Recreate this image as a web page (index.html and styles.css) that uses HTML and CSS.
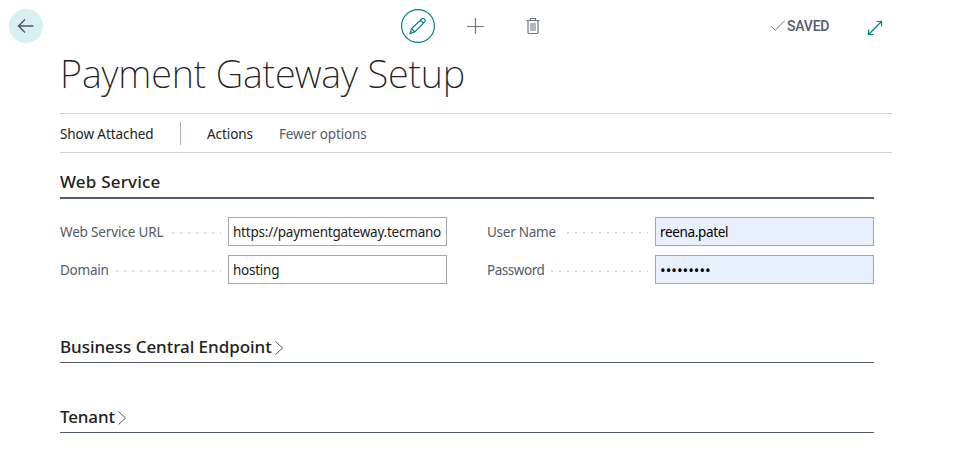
FILE: index.html
```html
<!DOCTYPE html>
<html lang="en">
<head>
<meta charset="utf-8">
<title>Payment Gateway Setup</title>
<link rel="stylesheet" href="styles.css">
</head>
<body>
<header class="topbar">
  <button class="back" aria-label="Back"><svg width="34" height="34" viewBox="0 0 34 34"><path d="M9.5 17H24.5M16 10.5L9.5 17L16 23.5"/></svg></button>
  <div class="tools">
    <button class="edit" aria-label="Edit"><svg width="34" height="34" viewBox="0 0 34 34"><circle cx="17" cy="17" r="16.4"/><path d="M9 24.5L10.7 19.6L20.9 9.8Q22.1 8.8 23.5 10.1Q25 11.6 23.8 12.9L13.6 22.9ZM10.7 19.6L13.6 22.9M19.4 11.2L22.3 14.2"/></svg></button>
    <button class="tool" aria-label="New"><svg width="18" height="18" viewBox="0 0 18 18"><path d="M1 9.5H18M9.5 1V17"/></svg></button>
    <button class="tool trash" aria-label="Delete"><svg width="16" height="18" viewBox="0 0 16 18"><path d="M1.5 3.5H14.5M5.5 3.5V1.5H10.5V3.5M3 3.5V15.5Q3 16.5 4 16.5H12Q13 16.5 13 15.5V3.5"/><path class="bin" d="M5.5 6.5H10.5V13.5H5.5Z"/></svg></button>
  </div>
  <div class="status"><svg width="16" height="12" viewBox="0 0 16 12"><path d="M1 6L5.2 10.2L14.7 .8"/></svg><span>SAVED</span></div>
  <button class="expand" aria-label="Expand"><svg width="16" height="16" viewBox="0 0 16 16"><path d="M1 15L15 1M9.5 1.5H14.5V6.5M1.5 9.5V14.5H6.5"/></svg></button>
</header>
<main>
  <h1><span>Payment Gateway Setup</span></h1>
  <nav class="actions">
    <span class="attached">Show Attached</span><i class="divider"></i><span class="menu">Actions</span><span class="fewer">Fewer options</span>
  </nav>
  <section class="group open">
    <h2><span class="h-web">Web Service</span></h2>
    <div class="fields">
      <div class="field"><span class="label l-url">Web Service URL</span><i class="dots d-url"></i><div class="input"><span class="v-url">https://paymentgateway.tecmano</span></div></div>
      <div class="field"><span class="label">User Name</span><i class="dots d-user"></i><div class="input filled"><span class="v-user">reena.patel</span></div></div>
      <div class="field"><span class="label">Domain</span><i class="dots d-domain"></i><div class="input"><span>hosting</span></div></div>
      <div class="field"><span class="label l-pass">Password</span><i class="dots d-pass"></i><div class="input filled"><span class="v-pass">•••••••••</span></div></div>
    </div>
  </section>
  <section class="group endpoint">
    <h2><span class="h-end">Business Central Endpoint</span><svg width="10" height="16" viewBox="0 0 10 16"><path d="M1.5 1.5L8.5 8L1.5 14.5"/></svg></h2>
  </section>
  <section class="group tenant">
    <h2><span class="h-ten">Tenant</span><svg width="10" height="16" viewBox="0 0 10 16"><path d="M1.5 1.5L8.5 8L1.5 14.5"/></svg></h2>
  </section>
</main>
</body>
</html>
```
FILE: styles.css
```css
* { box-sizing: border-box; }
body { margin: 0; background: #fff; color: #212121; font: 14px/20px "Noto Sans", sans-serif; height: 449px; overflow: hidden; }
button { padding: 0; border: 0; background: none; display: block; }
svg { display: block; fill: none; stroke: #6b7585; stroke-width: 1.2; flex: none; }
span { white-space: nowrap; }
.topbar { height: 52px; padding-left: 9px; display: flex; align-items: center; }
.back { border-radius: 50%; background: #d9f0f2; }
.back svg { stroke: #4c5558; stroke-width: 1.4; }
.tools { display: flex; align-items: center; margin-left: 358px; width: 140px; }
.edit svg { stroke: #008089; stroke-width: 1.2; }
.tool { margin-left: 31px; }
.trash { margin-left: 41px; }
.trash .bin { fill: #b4b8c0; stroke: #aeb3bc; stroke-width: 1; }
.status { display: flex; align-items: center; margin-left: 229px; width: 97px; color: #505c6d; font: 500 14px/20px Roboto, sans-serif; gap: 1px; letter-spacing: -.2px; }
.status svg { stroke-width: 1; }
.expand { margin: 4px 0 0; }
.expand svg { stroke: #008089; }
main { margin-left: 60px; width: 832px; }
h1 { margin: -2px 0 0; height: 63px; font: 250 38px/46px "Noto Sans", sans-serif; letter-spacing: -.16px; }
.actions { height: 40px; border: solid #d2d3d5; border-width: 1px 0; display: flex; align-items: center; font-size: 13.5px; letter-spacing: -.08px; }
.actions span { padding-top: 2px; }
.attached { width: 120px; }
.divider { width: 1px; height: 23px; background: #a3abb7; margin-right: 26px; }
.menu { width: 72px; }
.actions .fewer { color: #505c6d; letter-spacing: -.15px; }
.group { width: 814px; }
h2 { margin: 0; height: 46px; padding-top: 17px; border-bottom: 2px solid #505c6d; font: 500 17px/24px "Noto Sans", sans-serif; display: flex; }
.h-web { letter-spacing: .2px; }
.h-end { letter-spacing: -.04px; }
.h-ten { letter-spacing: -.15px; }
h2 svg { margin: 5px 0 0 2px; stroke: #555; stroke-width: 1; }
.fields { display: grid; grid-template-columns: 387px 387px; gap: 9px 40px; padding-top: 18px; height: 131px; align-content: start; font-size: 13.5px; letter-spacing: -.25px; }
.field { height: 29px; display: flex; align-items: center; }
.label { flex: 1; color: #505c6d; min-width: 0; padding-top: 1px; }
.l-url { letter-spacing: -.15px; }
.l-pass { letter-spacing: -.45px; }
.dots { height: 2px; margin: 3px 7px 0 0; background: linear-gradient(to right, #d8dadd 2px, transparent 2px) 0 0 / 8px 2px; }
.d-url { width: 49px; }
.d-user { width: 81px; }
.d-domain { width: 105px; }
.d-pass { width: 97px; }
.input { width: 219px; height: 29px; border: 1px solid #a6a7a9; padding: 4px; line-height: 20px; overflow: hidden; }
.v-url { letter-spacing: -.22px; }
.v-user { letter-spacing: -.35px; }
.v-pass { font-size: 15px; letter-spacing: 0; }
.filled { background: #e8f0fe; color: #000; }
.endpoint h2, .tenant h2 { border-bottom-width: 1px; }
.endpoint h2 { height: 33px; padding-top: 5px; }
.tenant h2 { height: 70px; padding-top: 42px; }
```
